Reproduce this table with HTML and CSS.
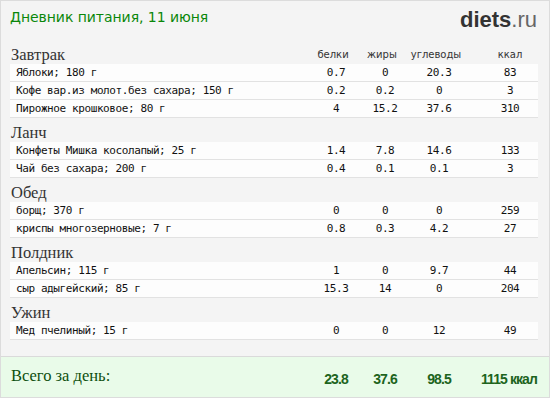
FILE: index.html
```html
<!DOCTYPE html>
<html lang="ru">
<head>
<meta charset="utf-8">
<title>Дневник питания</title>
<link rel="stylesheet" href="styles.css">
</head>
<body>
<div class="page">
  <header class="top">
    <h1 class="title">Дневник питания, 11 июня</h1>
    <div class="logo"><b>diets</b>.ru</div>
  </header>
  <main class="diary">
    <section class="meal">
      <div class="grid meal-head">
        <h2 class="meal-name">Завтрак</h2>
        <span class="lbl">белки</span><span class="lbl">жиры</span><span class="lbl">углеводы</span><span class="lbl c4">ккал</span>
      </div>
      <div class="grid row"><span class="name">Яблоки; 180 г</span><span>0.7</span><span>0</span><span>20.3</span><span class="c4">83</span></div>
      <div class="grid row"><span class="name">Кофе вар.из молот.без сахара; 150 г</span><span>0.2</span><span>0.2</span><span>0</span><span class="c4">3</span></div>
      <div class="grid row"><span class="name">Пирожное крошковое; 80 г</span><span>4</span><span>15.2</span><span>37.6</span><span class="c4">310</span></div>
    </section>
    <section class="meal">
      <div class="grid meal-head"><h2 class="meal-name">Ланч</h2></div>
      <div class="grid row"><span class="name">Конфеты Мишка косолапый; 25 г</span><span>1.4</span><span>7.8</span><span>14.6</span><span class="c4">133</span></div>
      <div class="grid row"><span class="name">Чай без сахара; 200 г</span><span>0.4</span><span>0.1</span><span>0.1</span><span class="c4">3</span></div>
    </section>
    <section class="meal">
      <div class="grid meal-head"><h2 class="meal-name">Обед</h2></div>
      <div class="grid row"><span class="name">борщ; 370 г</span><span>0</span><span>0</span><span>0</span><span class="c4">259</span></div>
      <div class="grid row"><span class="name">криспы многозерновые; 7 г</span><span>0.8</span><span>0.3</span><span>4.2</span><span class="c4">27</span></div>
    </section>
    <section class="meal">
      <div class="grid meal-head"><h2 class="meal-name">Полдник</h2></div>
      <div class="grid row"><span class="name">Апельсин; 115 г</span><span>1</span><span>0</span><span>9.7</span><span class="c4">44</span></div>
      <div class="grid row"><span class="name">сыр адыгейский; 85 г</span><span>15.3</span><span>14</span><span>0</span><span class="c4">204</span></div>
    </section>
    <section class="meal">
      <div class="grid meal-head"><h2 class="meal-name">Ужин</h2></div>
      <div class="grid row"><span class="name">Мед пчелиный; 15 г</span><span>0</span><span>0</span><span>12</span><span class="c4">49</span></div>
    </section>
  </main>
  <footer class="total">
    <div class="grid total-row">
      <span class="total-name">Всего за день:</span><span class="sum">23.8</span><span class="sum">37.6</span><span class="sum">98.5</span><span class="sum sum-kcal">1115 ккал</span>
    </div>
  </footer>
</div>
</body>
</html>
```
FILE: styles.css
```css
html, body {
  margin: 0;
  padding: 0;
  background: #f4f4f4;
}
.page {
  box-sizing: border-box;
  width: 550px;
  height: 398px;
  border: 1px solid #dcdcdc;
  background: #f4f4f4;
  display: flex;
  flex-direction: column;
}
.top {
  height: 39px;
  display: flex;
  justify-content: space-between;
  align-items: flex-start;
  padding: 0 12px 0 9px;
}
.title {
  margin: 0;
  padding-top: 8px;
  font-family: "DejaVu Sans", Verdana, sans-serif;
  font-weight: normal;
  font-size: 14px;
  line-height: 16px;
  letter-spacing: -0.05px;
  color: #0a870a;
}
.logo {
  padding-top: 8px;
  font-family: "Liberation Sans", Arial, sans-serif;
  font-size: 22px;
  line-height: 22px;
  color: #666;
}
.logo b {
  color: #333;
  font-weight: bold;
}
.diary {
  padding: 0 11px 0 9px;
}
.grid {
  display: grid;
  grid-template-columns: 1fr 48px 50px 58px 70px;
  align-items: start;
}
.grid .c4 {
  padding-left: 14px;
}
.meal-head {
  height: 24px;
}
.meal-name {
  margin: 0;
  padding: 5px 0 0 1px;
  font-family: "Liberation Serif", "Times New Roman", serif;
  font-weight: normal;
  font-size: 16.5px;
  line-height: 19px;
  color: #333;
}
.lbl {
  padding-top: 8px;
  padding-right: 6px;
  font-family: "DejaVu Sans", Verdana, sans-serif;
  font-size: 10px;
  line-height: 13px;
  color: #333;
  text-align: center;
}
.lbl.c4 {
  padding-right: 0;
}
.row {
  height: 17px;
  background: #fdfdfd;
  border-bottom: 1px solid #e2e2e2;
  font-family: "DejaVu Sans Mono", "Liberation Mono", monospace;
  font-size: 11px;
  letter-spacing: -0.4px;
  line-height: 17px;
  color: #111;
  text-align: center;
}
.row .name {
  padding-left: 6px;
  text-align: left;
  white-space: nowrap;
}
.total {
  margin-top: auto;
  height: 40px;
  border-top: 1px solid #dadada;
  background: #e9fbe9;
  padding: 0 11px 0 9px;
}
.total-name {
  padding: 10px 0 0 1px;
  font-family: "Liberation Serif", "Times New Roman", serif;
  font-size: 16.5px;
  line-height: 18px;
  color: #0e4f0e;
}
.sum {
  padding-top: 14px;
  font-family: "Liberation Sans", Arial, sans-serif;
  font-weight: bold;
  font-size: 14px;
  line-height: 16px;
  letter-spacing: -0.9px;
  color: #1d641d;
  text-align: center;
  white-space: nowrap;
}
.sum-kcal {
  text-align: right;
  padding-right: 1px;
}
```
